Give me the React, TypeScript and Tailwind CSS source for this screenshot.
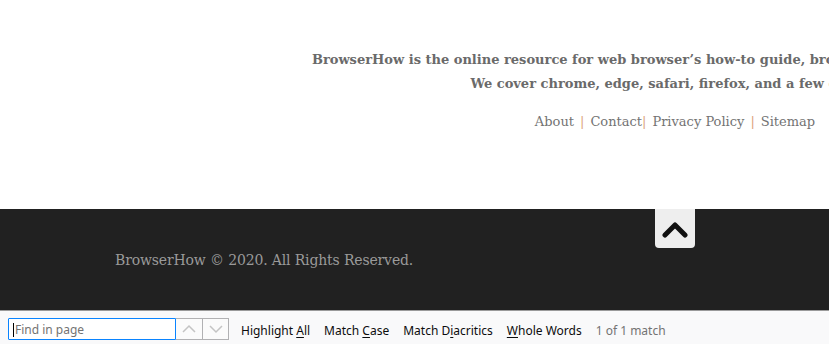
const serif = { fontFamily: '"DejaVu Serif", "Liberation Serif", serif' };

const links = ["About", "Contact", "Privacy Policy", "Sitemap"];

const FindOption = ({ before, hot, after }: { before: string; hot: string; after: string }) => (
  <span className="text-[12px] text-[#0c0c0d] whitespace-nowrap">
    {before}
    <span className="underline underline-offset-2">{hot}</span>
    {after}
  </span>
);

export default function App() {
  return (
    <div className="w-[829px] h-[344px] overflow-hidden flex flex-col bg-white">
      <div className="h-[310px] overflow-hidden shrink-0">
        <div className="w-[1350px] flex flex-col" style={serif}>
          <section className="h-[209px] flex flex-col items-center pt-[48px] text-[#6a6a6a]">
            <p className="font-bold text-[13px] leading-[24px] text-center whitespace-nowrap">
              BrowserHow is the online resource for web browser’s how-to guide, browser tips, tricks, and hacks.
            </p>
            <p className="font-bold text-[13px] leading-[24px] text-center whitespace-nowrap">
              We cover chrome, edge, safari, firefox, and a few others.
            </p>
            <nav className="mt-[14px] flex items-center text-[13px] text-[#737373] leading-[24px] whitespace-nowrap">
              {links.map((l, i) => (
                <span key={l} className="flex items-center">
                  {i > 0 && (
                    <span className={i === 2 ? "text-[#dca27a] mr-[6px]" : "text-[#dca27a] mx-[6px]"}>|</span>
                  )}
                  {l}
                </span>
              ))}
            </nav>
          </section>
          <footer className="relative h-[101px] bg-[#212121]">
            <div className="w-[1120px] mx-auto pt-[39px]">
              <p className="text-[14px] tracking-[-0.15px] text-[#9a9a9a] leading-[24px]">
                BrowserHow © 2020. All Rights Reserved.
              </p>
            </div>
            <button className="absolute left-[655px] top-0 w-[40px] h-[39px] bg-[#eeeeee] rounded-b-[4px] flex items-center justify-center">
              <svg width="26" height="18" viewBox="0 0 26 18">
                <polyline points="3,15 13,5 23,15" fill="none" stroke="#111" strokeWidth="5" strokeLinecap="round" strokeLinejoin="round" />
              </svg>
            </button>
          </footer>
        </div>
      </div>
      <div
        className="flex-1 bg-[#f9f9fa] border-t border-[#9a9a9a] flex items-start pt-[7px] pl-[8px]"
        style={{ fontFamily: '"Noto Sans", "Open Sans", sans-serif' }}
      >
        <div className="flex h-[22px]">
          <div className="w-[168px] h-[22px] border border-[#0a84ff] bg-white flex items-center pl-[4px] pt-[1px] text-[12px] text-[#737373] rounded-l-[1px]">
            <span className="w-px h-[14px] bg-black mr-[1px]" />
            Find in page
          </div>
          <div className="w-[27px] border-y border-r border-[#b1b1b3] flex items-center justify-center bg-[#fbfbfb]">
            <svg width="14" height="10" viewBox="0 0 14 10">
              <polyline points="1,8 7,2 13,8" fill="none" stroke="#c4c4c4" strokeWidth="1.5" />
            </svg>
          </div>
          <div className="w-[26px] border-y border-r border-[#b1b1b3] flex items-center justify-center bg-[#fbfbfb]">
            <svg width="14" height="10" viewBox="0 0 14 10">
              <polyline points="1,2 7,8 13,2" fill="none" stroke="#c4c4c4" strokeWidth="1.5" />
            </svg>
          </div>
        </div>
        <div className="ml-[12px] h-[22px] pt-[3px] flex items-center gap-[14px] leading-none">
          <FindOption before="Highlight " hot="A" after="ll" />
          <FindOption before="Match " hot="C" after="ase" />
          <FindOption before="Match D" hot="i" after="acritics" />
          <FindOption before="" hot="W" after="hole Words" />
          <span className="text-[12px] text-[#737373] whitespace-nowrap">1 of 1 match</span>
        </div>
      </div>
    </div>
  );
}
